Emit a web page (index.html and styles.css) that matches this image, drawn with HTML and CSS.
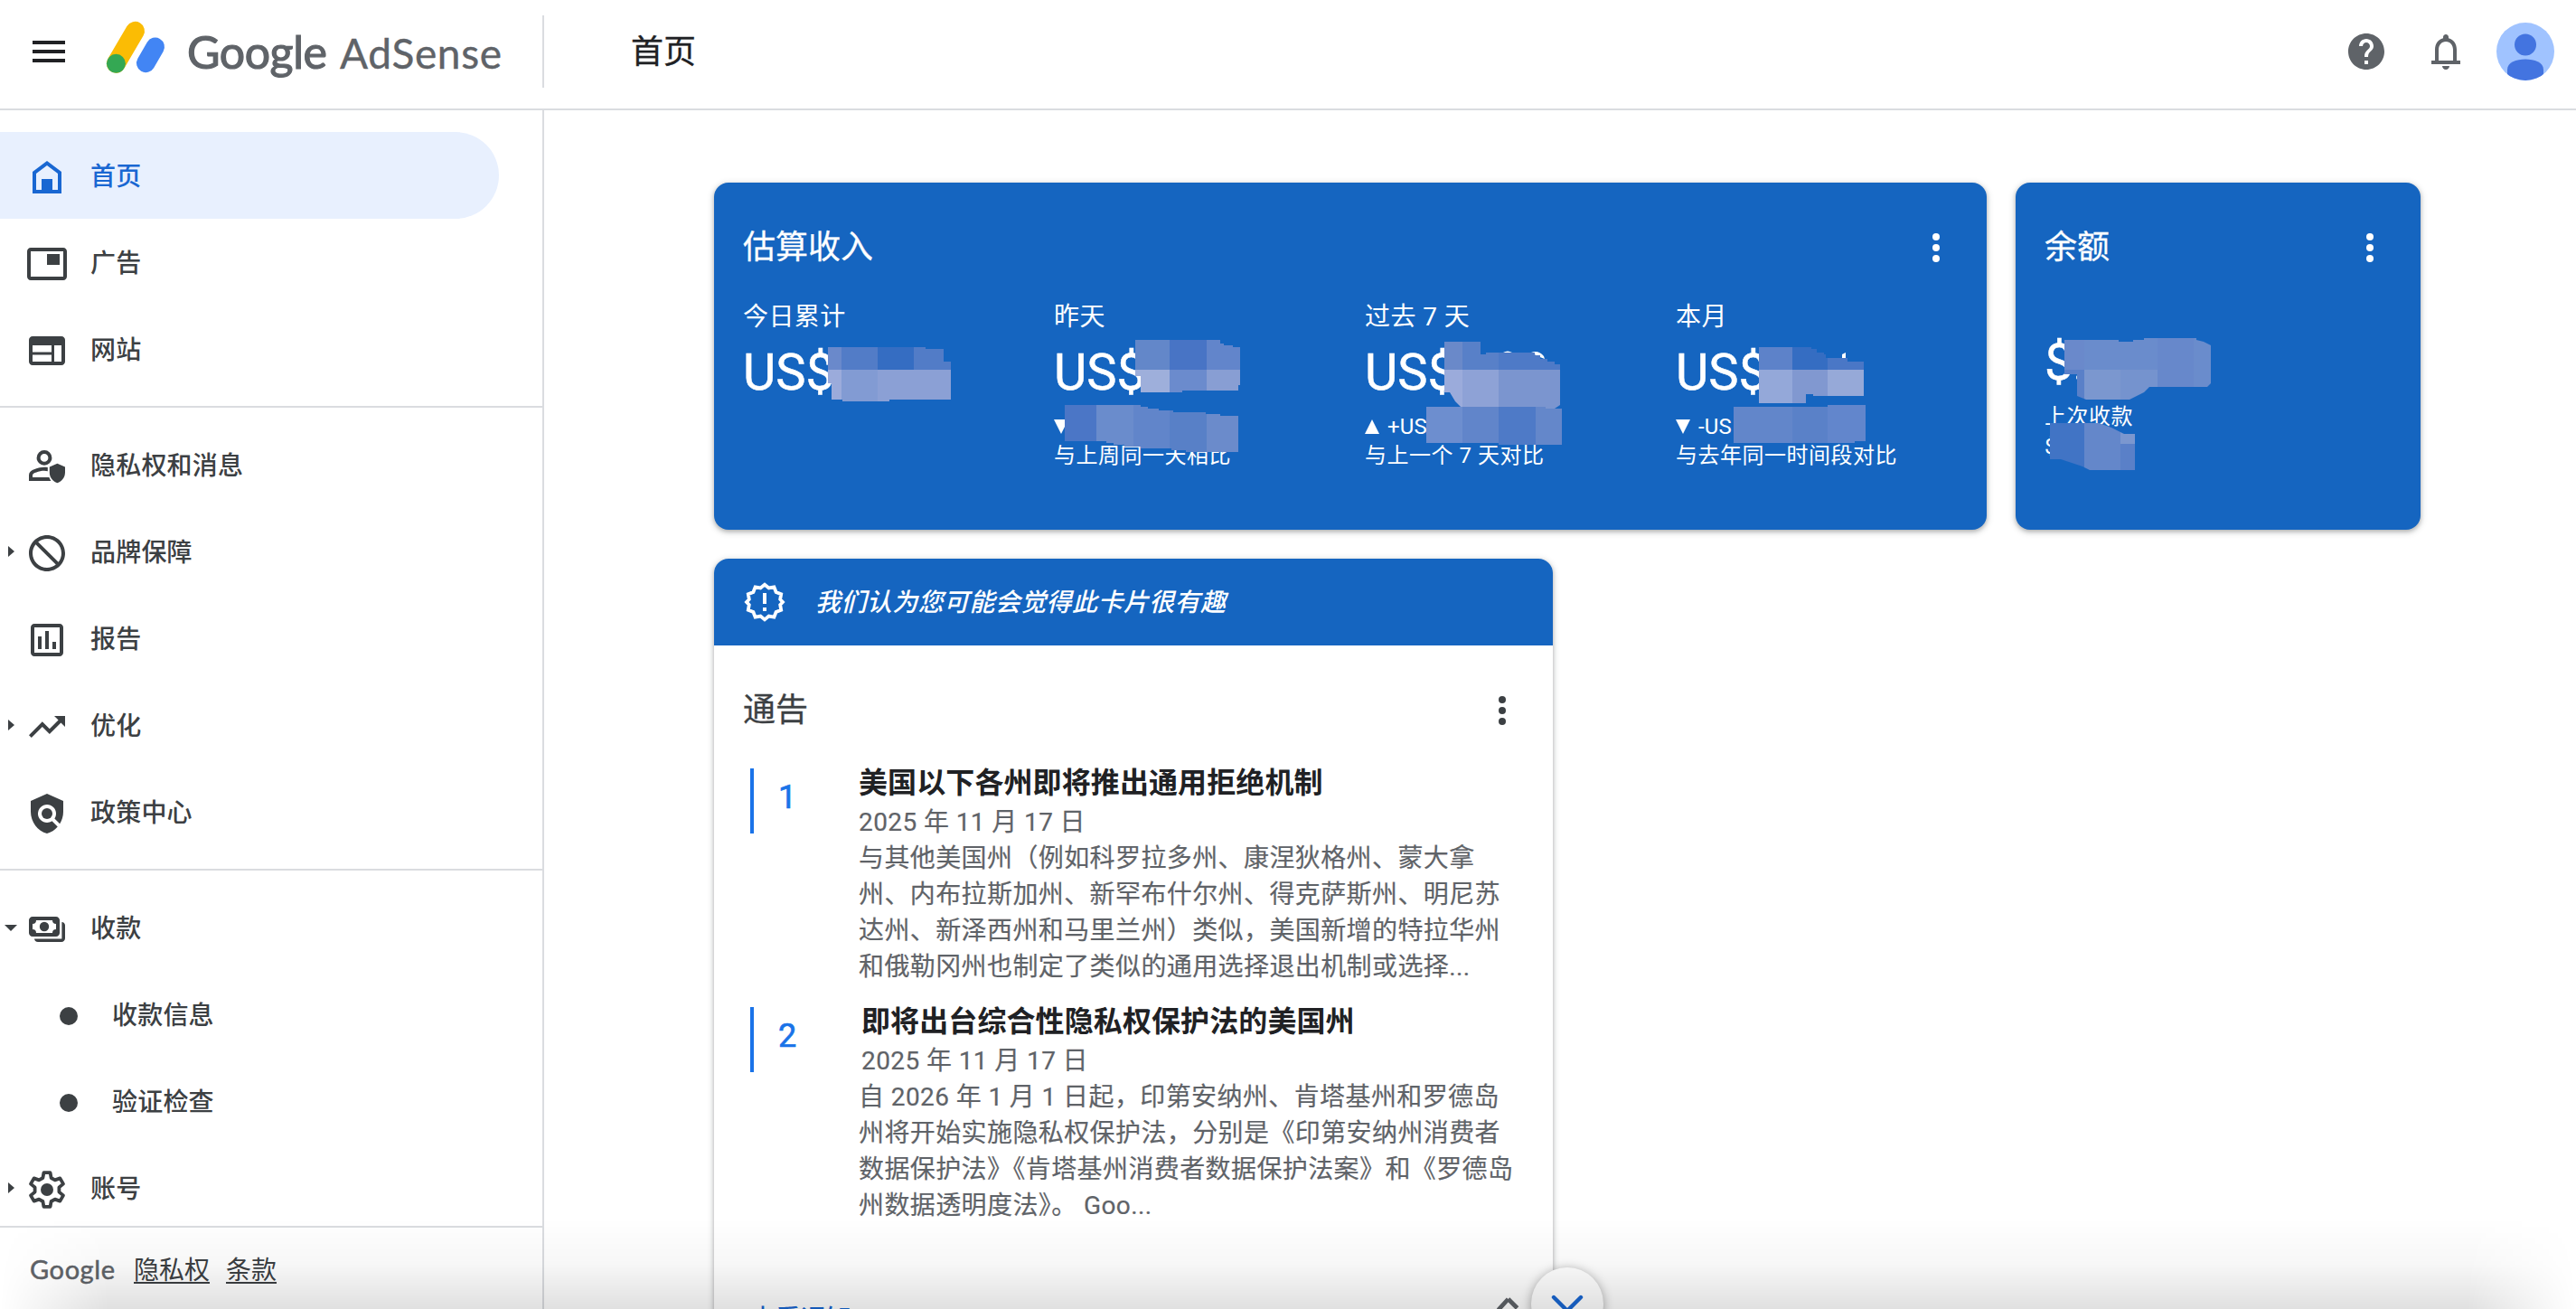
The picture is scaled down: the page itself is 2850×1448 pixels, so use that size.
FILE: index.html
```html
<!DOCTYPE html>
<html lang="zh-CN">
<head>
    <meta charset="UTF-8">
    <title>Google AdSense</title>
    <link rel="stylesheet" href="styles.css">
</head>
<body>
    <header class="topbar">
        <div class="brand">
            <svg class="icon menu-icon" viewBox="0 0 24 24"><path d="M3 18h18v-2H3v2zm0-5h18v-2H3v2zm0-7v2h18V6H3z"/></svg>
            <svg class="logo" width="450" height="76" viewBox="0 0 450 76">
                <line x1="18.4" y1="52.3" x2="39.5" y2="16.3" stroke="#fbbc04" stroke-width="21" stroke-linecap="round"/>
                <line x1="51.3" y1="51.8" x2="61.7" y2="33.8" stroke="#4285f4" stroke-width="20.6" stroke-linecap="round"/>
                <circle cx="18.4" cy="52.3" r="10.5" fill="#34a853"/>
                <text class="logo-google" x="97" y="57.5" textLength="155">Google</text>
                <text class="logo-product" x="266" y="57.5" textLength="179">AdSense</text>
            </svg>
        </div>
        <h1>首页</h1>
        <div class="tools">
            <svg class="icon" viewBox="0 0 24 24"><path d="M12 2C6.48 2 2 6.48 2 12s4.48 10 10 10 10-4.48 10-10S17.52 2 12 2zm1 17h-2v-2h2v2zm2.07-7.75l-.9.92C13.45 12.9 13 13.5 13 15h-2v-.5c0-1.1.45-2.1 1.17-2.83l1.24-1.26c.37-.36.59-.86.59-1.41 0-1.1-.9-2-2-2s-2 .9-2 2H8c0-2.21 1.79-4 4-4s4 1.79 4 4c0 .88-.36 1.68-.93 2.25z"/></svg>
            <svg class="icon" viewBox="0 0 24 24"><path d="M18 17v-6c0-3.07-1.63-5.64-4.5-6.32V4c0-.83-.67-1.5-1.5-1.5s-1.5.67-1.5 1.5v.68C7.64 5.36 6 7.92 6 11v6H4v2h16v-2h-2zm-2 0H8v-6c0-2.48 1.51-4.5 4-4.5s4 2.02 4 4.5v6zm-4 5c1.1 0 2-.9 2-2h-4c0 1.1.9 2 2 2z"/></svg>
            <svg class="avatar" viewBox="0 0 64 64">
                <defs><clipPath id="round"><circle cx="32" cy="32" r="32"/></clipPath></defs>
                <g clip-path="url(#round)">
                    <rect width="64" height="64" fill="#a0c3ff"/>
                    <circle cx="32" cy="24.5" r="12" fill="#4374e0"/>
                    <path d="M12 52c0-8 10-11.500 20-11.500s20 3.500 20 11.500v12H12z" fill="#4374e0"/>
                </g>
            </svg>
        </div>
    </header>

    <div class="page">
        <aside class="sidebar">
            <nav>
                <ul>
                    <li class="active"><svg class="icon" viewBox="0 0 24 24"><path d="M12 3L4 9v12h16V9l-8-6zm6 16h-3v-6H9v6H6v-9l6-4.500 6 4.500v9z"/></svg>首页</li>
                    <li><svg class="icon" viewBox="0 0 24 24"><path d="M19 6.500h-7v6h7v-6zm2-3.500H3c-1.100 0-2 .9-2 2v14c0 1.100.9 2 2 2h18c1.100 0 2-.9 2-2V5c0-1.100-.9-2-2-2zm0 16H3V5h18v14z"/></svg>广告</li>
                    <li><svg class="icon" viewBox="0 0 24 24"><path d="M20 4H4c-1.100 0-2 .9-2 2v12c0 1.100.9 2 2 2h16c1.100 0 2-.9 2-2V6c0-1.100-.9-2-2-2zM4 9h10.500v3.700H4V9zm0 5.300h10.500V18H4v-3.700zM20 18h-4V9h4v9z"/></svg>网站</li>
                </ul>
                <ul>
                    <li><svg class="icon" viewBox="0 0 24 24"><path fill-rule="evenodd" d="M10.500 3a4.200 4.200 0 1 0 0 8.400 4.200 4.200 0 0 0 0-8.400zm0 2a2.200 2.200 0 1 1 0 4.400 2.200 2.200 0 0 1 0-4.400zM12.400 12.500c-.7-.1-1.300-.1-1.900-.1-2.900 0-8.500 1.400-8.500 4.300V20h12.200c-.4-.6-.8-1.300-1-2H4v-1.300c0-.9 3.500-2.300 6.500-2.300.7 0 1.300.1 1.900.2z"/><path d="M17.700 10.400l-4.300 1.900v3c0 2.700 1.800 5.100 4.300 5.800 2.500-.7 4.300-3.100 4.300-5.800v-3z"/></svg>隐私权和消息</li>
                    <li class="closed"><svg class="icon" viewBox="0 0 24 24"><path d="M12 2C6.480 2 2 6.480 2 12s4.480 10 10 10 10-4.480 10-10S17.520 2 12 2zM4 12c0-4.420 3.580-8 8-8 1.850 0 3.550.63 4.900 1.690L5.690 16.900C4.630 15.550 4 13.850 4 12zm8 8c-1.850 0-3.550-.63-4.900-1.690L18.310 7.100C19.370 8.450 20 10.150 20 12c0 4.420-3.580 8-8 8z" transform="matrix(-1 0 0 1 24 0)"/></svg>品牌保障</li>
                    <li><svg class="icon" viewBox="0 0 24 24"><path d="M19 3H5c-1.100 0-2 .9-2 2v14c0 1.100.9 2 2 2h14c1.100 0 2-.9 2-2V5c0-1.100-.9-2-2-2zm0 16H5V5h14v14zM7 10h2v7H7zm4-3h2v10h-2zm4 6h2v4h-2z"/></svg>报告</li>
                    <li class="closed"><svg class="icon" viewBox="0 0 24 24"><path d="M16 6l2.290 2.290-4.880 4.880-4-4L2 16.590 3.410 18l6-6 4 4 6.300-6.290L22 12V6h-6z"/></svg>优化</li>
                    <li><svg class="icon" viewBox="0 0 24 24"><path d="M21 5l-9-4-9 4v6c0 5.550 3.840 10.740 9 12 2.300-.56 4.330-1.900 5.880-3.710l-3.120-3.120c-1.940 1.290-4.580 1.070-6.290-.64-1.950-1.950-1.950-5.120 0-7.070 1.950-1.950 5.120-1.950 7.070 0 1.710 1.710 1.920 4.350.64 6.290l2.900 2.900C20.290 15.690 21 13.380 21 11V5z"/><circle cx="12" cy="12" r="3"/></svg>政策中心</li>
                </ul>
                <ul>
                    <li class="open"><svg class="icon" viewBox="0 0 24 24"><path fill-rule="evenodd" d="M4 5h13c1.100 0 2 .9 2 2v7c0 1.100-.9 2-2 2H4c-1.100 0-2-.9-2-2V7c0-1.100.9-2 2-2zm2 2a2 2 0 0 1-2 2v3a2 2 0 0 1 2 2h9a2 2 0 0 1 2-2V9a2 2 0 0 1-2-2z"/><circle cx="10.500" cy="10.500" r="2.600"/><path d="M20.200 8c1 0 1.800.8 1.800 1.800V17c0 1.100-.9 2-2 2H7c-1.100 0-2-.9-2-1.800h15.200z"/></svg>收款</li>
                    <li class="sub">收款信息</li>
                    <li class="sub">验证检查</li>
                    <li class="closed"><svg class="icon" viewBox="0 0 24 24"><path d="M10.200 2.600h3.600l.5 2.900 2.100 1.200 2.800-1 1.800 3.100-2.300 1.900v2.600l2.300 1.900-1.800 3.100-2.800-1-2.100 1.200-.5 2.900h-3.600l-.5-2.900-2.100-1.200-2.800 1L3 15.200l2.300-1.900v-2.600L3 8.800l1.800-3.100 2.800 1 2.100-1.200z" fill="none" stroke="currentColor" stroke-width="1.900" stroke-linejoin="round"/><circle cx="12" cy="12" r="3.500"/></svg>账号</li>
                </ul>
            </nav>
            <footer>
                <span class="footer-logo">Google</span>
                <a href="#">隐私权</a>
                <a href="#">条款</a>
            </footer>
        </aside>

        <main>
            <div class="row">
                <section class="card blue earnings">
                    <div class="card-head">
                        <h2>估算收入</h2>
                        <span class="dots"><i></i><i></i><i></i></span>
                    </div>
                    <div class="metrics">
                        <div class="metric">
                            <div class="label">今日累计</div>
                            <div class="amount">US$</div>
                        </div>
                        <div class="metric">
                            <div class="label">昨天</div>
                            <div class="amount">US$</div>
                            <div class="change"><span class="down"></span></div>
                            <div class="compare">与上周同一天相比</div>
                        </div>
                        <div class="metric">
                            <div class="label">过去 7 天</div>
                            <div class="amount">US$</div>
                            <div class="change"><span class="up"></span>+US</div>
                            <div class="compare">与上一个 7 天对比</div>
                        </div>
                        <div class="metric">
                            <div class="label">本月</div>
                            <div class="amount">US$</div>
                            <div class="change"><span class="down"></span>-US</div>
                            <div class="compare">与去年同一时间段对比</div>
                        </div>
                    </div>
                    <!-- mosaic over the private figures -->
                    <svg class="mosaic" viewBox="790 202 1408 384">
                        <clipPath id="m1"><path d="M916 384h108v2h20v14h8v42h-68v2h-52v-2h-12v-18h-4z"/></clipPath>
                        <g clip-path="url(#m1)">
                            <path fill="#6a89cb" d="M910 380h21v29h-21z"/><path fill="#527cc7" d="M931 380h40v29h-40zM1011 380h41v29h-41z"/><path fill="#356dc2" d="M971 380h40v29h-40z"/>
                            <path fill="#9babdb" d="M910 409h21v40h-21z"/><path fill="#829bd3" d="M931 409h40v40h-40z"/><path fill="#8ba0d5" d="M971 409h82v40h-82z"/>
                        </g>
                        <clipPath id="m2"><path d="M1256 376h94v4h4v2h10v2h8v42h-2v6h-62v2h-46v-18h-6z"/></clipPath>
                        <g clip-path="url(#m2)">
                            <path fill="#6387c9" d="M1250 370h44v39h-44z"/><path fill="#4874c5" d="M1294 370h41v39h-41z"/><path fill="#6285cb" d="M1335 370h40v39h-40z"/>
                            <path fill="#9eafdb" d="M1250 409h44v30h-44z"/><path fill="#6b8bcd" d="M1294 409h41v30h-41z"/><path fill="#889ed3" d="M1335 409h40v30h-40z"/>
                        </g>
                        <clipPath id="m3"><path d="M1178 448h84v2h8v2h12v2h16v2h36v2h16v2h20v40h-58v-2h-16v-2h-34v-2h-18v-2h-12v-2h-8v-2h-46z"/></clipPath>
                        <g clip-path="url(#m3)">
                            <path fill="#4b76c6" d="M1170 440h43v70h-43z"/><path fill="#6a8ccc" d="M1213 440h41v70h-41z"/><path fill="#6185ca" d="M1254 440h40v70h-40z"/><path fill="#5880c7" d="M1294 440h41v70h-41z"/><path fill="#6b8bcb" d="M1335 440h40v70h-40z"/>
                        </g>
                        <!-- tops of digits left uncovered -->
                        <path fill="#fff" d="M1663 390q5-3 10 0zM1694 390q8-3 14 4l1 3-8-3zM2038 392l4-2v6h-4z"/>
                        <clipPath id="m4"><path d="M1598 378h40v14h6v-2h54v3h6v4h8v3h8v3h6v45l-6 4h-102l-8-8-6-10h-6z"/></clipPath>
                        <g clip-path="url(#m4)">
                            <path fill="#6a89c9" d="M1590 370h28v39h-28z"/><path fill="#5880c8" d="M1618 370h40v39h-40z"/><path fill="#4e7ac7" d="M1658 370h70v39h-70z"/>
                            <path fill="#9babdb" d="M1590 409h28v45h-28z"/><path fill="#8ea2d6" d="M1618 409h40v45h-40z"/><path fill="#7b95cf" d="M1658 409h70v45h-70z"/>
                        </g>
                        <path fill="#6d8ecf" d="M1578 450h40v40h-40z"/><path fill="#6185ca" d="M1618 450h40v40h-40z"/><path fill="#4e7ac7" d="M1658 450h41v42h-41z"/><path fill="#6487ca" d="M1699 450h11v2h18v40h-29z"/>
                        <clipPath id="m6"><path d="M1946 384h58v2h6v4h8v2h2v4h24v4h18v38h-56v-2h-8v10h-52z"/></clipPath>
                        <g clip-path="url(#m6)">
                            <path fill="#5d82c9" d="M1940 380h43v29h-43z"/><path fill="#356dc2" d="M1983 380h39v29h-39z"/><path fill="#4a77c6" d="M2022 380h42v29h-42z"/>
                            <path fill="#94a8d9" d="M1940 409h43v40h-43z"/><path fill="#8198d0" d="M1983 409h39v40h-39z"/><path fill="#96a9d8" d="M2022 409h42v40h-42z"/>
                        </g>
                        <path fill="#6286ca" d="M1918 450h65v40h-65z"/><path fill="#5a81c8" d="M1983 450h39v40h-39z"/><path fill="#6286cc" d="M2022 448h42v40h-12v2h-30z"/>
                    </svg>
                </section>

                <section class="card blue balance">
                    <div class="card-head">
                        <h2>余额</h2>
                        <span class="dots"><i></i><i></i><i></i></span>
                    </div>
                    <div class="amount">$.</div>
                    <div class="compare">上次收款</div>
                    <div class="compare">$</div>
                    <svg class="mosaic" viewBox="2230 202 448 384">
                        <clipPath id="m8"><path d="M2284 376h60v2h16v-2h12v-2h58v2l8 2 8 4v42l-4 4h-64l-6 6-8 4-8 4h-48l-10-4v-24h-14z"/></clipPath>
                        <g clip-path="url(#m8)">
                            <path fill="#6a89cb" d="M2280 370h26v39h-26z"/><path fill="#6a8ccc" d="M2306 370h81v39h-81zM2427 370h20v60h-20z"/><path fill="#6788cb" d="M2387 370h40v60h-40z"/>
                            <path fill="#5a80c8" d="M2280 409h26v40h-26z"/><path fill="#7b97cf" d="M2306 409h40v40h-40z"/><path fill="#7593ce" d="M2346 409h41v40h-41z"/>
                        </g>
                        <clipPath id="m9"><path d="M2268 468h54l14 5 10 5 4 2h12v40h-50l-8-4-12-4-12-4h-12z"/></clipPath>
                        <g clip-path="url(#m9)">
                            <path fill="#4174c5" d="M2260 460h46v60h-46z"/><path fill="#6487ca" d="M2306 460h40v60h-40z"/><path fill="#7b97cf" d="M2346 460h20v31h-20z"/><path fill="#5a80c8" d="M2346 491h20v30h-20z"/>
                        </g>
                    </svg>
                </section>
            </div>

            <section class="card notices">
                <div class="banner">
                    <svg class="icon" viewBox="0 0 24 24"><path d="M12 2.300l2.300 1.900 2.900-.5 1.100 2.800 2.800 1.100-.5 2.900L22 12l-1.400 1.500.5 2.900-2.800 1.100-1.100 2.800-2.900-.5L12 21.700l-2.300-1.900-2.900.5-1.100-2.800-2.800-1.100.5-2.900L2 12l1.400-1.500-.5-2.900 2.800-1.100 1.100-2.800 2.900.5z" fill="none" stroke="currentColor" stroke-width="1.900"/><path d="M11 7h2v6h-2zM11 15h2v2h-2z"/></svg>
                    <em>我们认为您可能会觉得此卡片很有趣</em>
                </div>
                <div class="card-head">
                    <h2>通告</h2>
                    <span class="dots"><i></i><i></i><i></i></span>
                </div>
                <article>
                    <div class="num">1</div>
                    <div class="text">
                        <h3>美国以下各州即将推出通用拒绝机制</h3>
                        <time>2025 年 11 月 17 日</time>
                        <p>与其他美国州（例如科罗拉多州、康涅狄格州、蒙大拿<br>州、内布拉斯加州、新罕布什尔州、得克萨斯州、明尼苏<br>达州、新泽西州和马里兰州）类似，美国新增的特拉华州<br>和俄勒冈州也制定了类似的通用选择退出机制或选择...</p>
                    </div>
                </article>
                <article>
                    <div class="num">2</div>
                    <div class="text">
                        <h3>即将出台综合性隐私权保护法的美国州</h3>
                        <time>2025 年 11 月 17 日</time>
                        <p>自 2026 年 1 月 1 日起，印第安纳州、肯塔基州和罗德岛<br>州将开始实施隐私权保护法，分别是《印第安纳州消费者<br>数据保护法》《肯塔基州消费者数据保护法案》和《罗德岛<br>州数据透明度法》。 Goo...</p>
                    </div>
                </article>
                <div class="card-foot">
                    <a href="#">查看通知</a>
                    <svg class="icon" viewBox="0 0 24 24"><path d="M12.300 2.500l5 5M12.300 2.500l-5.500 6" fill="none" stroke="currentColor" stroke-width="2.400"/></svg>
                </div>
            </section>
        </main>
    </div>

    <div class="fab"><svg viewBox="0 0 24 24"><path d="M4.500 8.500l7.500 7.500 7.500-7.500" fill="none" stroke="#1967d2" stroke-width="2.200" stroke-linecap="round"/></svg></div>
    <div class="bottom-shade"></div>
</body>
</html>
```
FILE: styles.css
```css
* {
    box-sizing: border-box;
}

body {
    margin: 0;
    height: 1448px;
    overflow: hidden;
    position: relative;
    background: #fff;
    color: #202124;
    font-family: Roboto, "Noto Sans CJK SC", sans-serif;
}

h1, h2, h3, p, ul {
    margin: 0;
    padding: 0;
    font-weight: 400;
}

.icon {
    width: 48px;
    height: 48px;
    fill: currentColor;
    flex: none;
}

/* Top bar */
.topbar {
    display: flex;
    height: 122px;
    border-bottom: 2px solid #dadce0;
}

.brand {
    display: flex;
    width: 602px;
    height: 80px;
    margin-top: 17px;
    border-right: 2px solid #dadce0;
}

.menu-icon {
    margin: 16px 32px 0 30px;
}

.logo {
    margin-top: 1px;
    fill: #5f6368;
    font-family: Lato, sans-serif;
}

.logo-google {
    font-size: 50px;
    stroke: #5f6368;
    stroke-width: 1.2px;
}

.logo-product {
    font-size: 46px;
    stroke: #5f6368;
    stroke-width: 0.4px;
}

.topbar h1 {
    margin-left: 96px;
    font-size: 36px;
    line-height: 116px;
    -webkit-text-stroke: 0.3px #202124;
}

.tools {
    display: flex;
    align-items: center;
    gap: 40px;
    height: 114px;
    margin-left: auto;
    padding-right: 24px;
    color: #5f6368;
}

.avatar {
    width: 64px;
    height: 64px;
    margin-left: -8px;
}

/* Sidebar */
.page {
    display: flex;
    height: 1326px;
    overflow: hidden;
}

.sidebar {
    display: flex;
    flex-direction: column;
    width: 602px;
    border-right: 2px solid #dadce0;
    color: #3c4043;
}

.sidebar nav {
    height: 1234px;
    padding-top: 24px;
    overflow: hidden;
}

.sidebar ul {
    list-style: none;
}

.sidebar ul + ul {
    margin-top: 15px;
    padding-top: 15px;
    border-top: 2px solid #dadce0;
}

.sidebar li {
    position: relative;
    display: flex;
    align-items: center;
    gap: 24px;
    width: 552px;
    height: 96px;
    padding: 0 0 3px 28px;
    font-size: 28px;
    font-weight: 500;
    letter-spacing: 0.2px;
}

.sidebar li .icon {
    margin-top: 7px;
}

.sidebar .active {
    background: #e8f0fe;
    color: #1967d2;
    border-radius: 0 48px 48px 0;
}

.sidebar .sub {
    padding-left: 66px;
    gap: 38px;
}

.sub::before {
    content: "";
    width: 20px;
    height: 20px;
    margin-top: 7px;
    border-radius: 50%;
    background: #3c4043;
}

.closed::before,
.open::before {
    content: "";
    position: absolute;
    left: 9px;
    top: 42px;
    border: 6px solid transparent;
    border-left: 7px solid #3c4043;
    border-right: 0;
}

.open::before {
    left: 5px;
    top: 45px;
    border: 7px solid transparent;
    border-top-color: #3c4043;
    border-bottom: 0;
}

.sidebar footer {
    display: flex;
    align-items: center;
    height: 92px;
    padding: 0 0 0 33px;
    border-top: 2px solid #dadce0;
    font-size: 28px;
}

.footer-logo {
    width: 115px;
    font-family: Lato, sans-serif;
    font-size: 29px;
    color: #5f6368;
    letter-spacing: 0.6px;
    -webkit-text-stroke: 0.5px #5f6368;
}

.sidebar footer a {
    margin-right: 18px;
    color: #3c4043;
    text-underline-offset: 3px;
}

/* Cards */
main {
    padding: 80px 0 0 188px;
}

.row {
    display: flex;
    gap: 32px;
    margin-bottom: 32px;
}

.card {
    position: relative;
    border-radius: 16px;
    background: #fff;
    box-shadow: 0 2px 4px rgba(60, 64, 67, 0.3), 0 2px 6px 2px rgba(60, 64, 67, 0.15);
}

.blue {
    height: 384px;
    padding: 0 32px;
    background: #1565c0;
    color: #fff;
}

.earnings {
    width: 1408px;
}

.balance {
    width: 448px;
}

.card-head {
    display: flex;
    justify-content: space-between;
    padding: 44px 20px 0 0;
}

.card-head h2 {
    padding-top: 5px;
    font-size: 36px;
    line-height: 47px;
    -webkit-text-stroke: 0.3px currentColor;
}

.dots {
    display: flex;
    flex-direction: column;
    gap: 4px;
    padding-top: 12px;
}

.dots i {
    width: 8px;
    height: 8px;
    border-radius: 50%;
    background: currentColor;
}

.metrics {
    display: grid;
    grid-template-columns: repeat(4, 344px);
    padding-top: 33px;
}

.label {
    font-size: 28px;
    line-height: 40px;
    letter-spacing: 0.4px;
}

.amount {
    font-size: 56px;
    line-height: 64px;
    padding-top: 9px;
    -webkit-text-stroke: 0.5px #fff;
}

.change {
    display: flex;
    align-items: center;
    gap: 9px;
    height: 32px;
    margin-top: 12px;
    font-size: 24px;
    letter-spacing: 0.2px;
}

.up,
.down {
    border: 8px solid transparent;
    border-top: 16px solid #fff;
    border-bottom: 0;
}

.up {
    border-top: 0;
    border-bottom: 16px solid #fff;
}

.compare {
    font-size: 24px;
    line-height: 33px;
    letter-spacing: 0.5px;
}

.balance .amount {
    margin: 62px 0 12px;
}

.mosaic {
    position: absolute;
    left: 0;
    top: 0;
    width: 100%;
    height: 100%;
}

/* Notices card */
.notices {
    width: 928px;
    height: 940px;
}

.banner {
    display: flex;
    align-items: center;
    gap: 32px;
    height: 96px;
    padding-left: 32px;
    border-radius: 16px 16px 0 0;
    background: #1565c0;
    color: #fff;
    font-size: 28px;
    font-weight: 500;
    letter-spacing: 0.4px;
}

.banner em {
    padding-bottom: 4px;
}

.notices .card-head {
    padding: 44px 52px 0 32px;
    color: #3c4043;
}

article {
    display: flex;
    height: 246px;
    margin: 34px 0 0 40px;
}

article + article {
    margin-top: 18px;
}

.num {
    width: 120px;
    height: 72px;
    margin-top: 6px;
    padding-left: 27px;
    border-left: 4px solid #1a73e8;
    color: #1a73e8;
    font-size: 36px;
    line-height: 65px;
    -webkit-text-stroke: 0.7px #1a73e8;
}

.text h3 {
    margin-bottom: 2px;
    font-size: 32px;
    font-weight: 700;
    line-height: 44px;
    letter-spacing: 0.1px;
    color: #202124;
}

.text time,
.text p {
    display: block;
    font-size: 28px;
    line-height: 40px;
    letter-spacing: 0.4px;
    white-space: nowrap;
    color: #5f6368;
    -webkit-text-stroke: 0.2px #5f6368;
}

article + article h3,
article + article time {
    padding-left: 3px;
}

.card-foot {
    display: flex;
    justify-content: space-between;
    margin: 74px 26px 0 40px;
    color: #5f6368;
}

.card-foot a {
    padding-top: 12px;
    color: #1967d2;
    font-size: 28px;
    font-weight: 500;
    line-height: 40px;
    text-decoration: none;
}

.card-foot .icon {
    margin-top: 4px;
}

/* Scroll button over the card edge */
.fab {
    position: absolute;
    left: 1694px;
    top: 1402px;
    width: 80px;
    height: 80px;
    padding: 16px;
    border-radius: 50%;
    background: #fff;
    box-shadow: 0 2px 12px rgba(0, 0, 0, 0.35);
}

.bottom-shade {
    position: absolute;
    left: 0;
    right: 0;
    bottom: 0;
    height: 100px;
    background: linear-gradient(rgba(0, 0, 0, 0), rgba(0, 0, 0, 0.03) 50%, rgba(0, 0, 0, 0.12));
    -webkit-mask-image: linear-gradient(90deg, transparent, #000 120px, #000 2730px, transparent);
    mask-image: linear-gradient(90deg, transparent, #000 120px, #000 2730px, transparent);
}
```
